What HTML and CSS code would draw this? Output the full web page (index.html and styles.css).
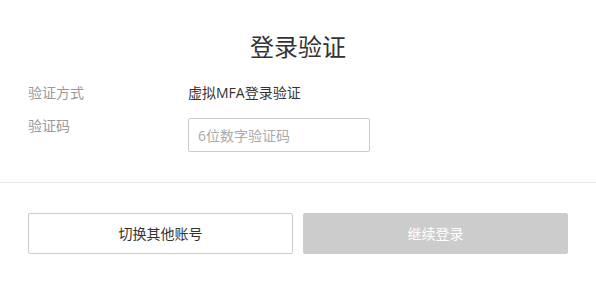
FILE: index.html
```html
<!DOCTYPE html>
<html lang="zh-CN">
<head>
<meta charset="utf-8">
<title>登录验证</title>
<link rel="stylesheet" href="styles.css">
</head>
<body>
<div class="page">
  <h1 class="title">登录验证</h1>
  <div class="form">
    <div class="row">
      <div class="label">验证方式</div>
      <div class="value">虚拟MFA登录验证</div>
    </div>
    <div class="row row-input">
      <div class="label">验证码</div>
      <input class="code-input" type="text" placeholder="6位数字验证码">
    </div>
  </div>
  <div class="divider"></div>
  <div class="actions">
    <button class="btn btn-default" type="button">切换其他账号</button>
    <button class="btn btn-disabled" type="button" disabled>继续登录</button>
  </div>
</div>
</body>
</html>
```

FILE: styles.css
```css
* { box-sizing: border-box; }
html, body {
  margin: 0;
  padding: 0;
  background: #fff;
  font-family: "Open Sans", "Noto Sans CJK SC", sans-serif;
  color: #333;
}
.page {
  padding-top: 31px;
}
.title {
  margin: 0;
  font-size: 24px;
  line-height: 32px;
  font-weight: normal;
  text-align: center;
  color: #333;
}
.form {
  padding: 0 28px;
  margin-top: 20px;
}
.row {
  display: flex;
  align-items: flex-start;
  font-size: 14px;
  line-height: 20px;
}
.row-input {
  margin-top: 13px;
}
.label {
  width: 160px;
  color: #999;
}
.value {
  color: #333;
}
.code-input {
  margin-top: 2px;
  width: 182px;
  height: 34px;
  border: 1px solid #ccc;
  border-radius: 2px;
  padding: 0 9px;
  font-family: inherit;
  font-size: 14px;
  color: #333;
  outline: none;
}
.code-input::placeholder {
  color: #aaa;
}
.divider {
  margin-top: 30px;
  height: 1px;
  background: #e5e5e5;
}
.actions {
  display: flex;
  gap: 10px;
  padding: 0 28px;
  margin-top: 30px;
}
.btn {
  flex: 1;
  height: 41px;
  border-radius: 2px;
  font-family: inherit;
  font-size: 14px;
  line-height: 20px;
  cursor: pointer;
}
.btn-default {
  background: #fff;
  border: 1px solid #ccc;
  color: #333;
}
.btn-disabled {
  background: #ccc;
  border: 1px solid #ccc;
  color: #fff;
  cursor: not-allowed;
}
```
